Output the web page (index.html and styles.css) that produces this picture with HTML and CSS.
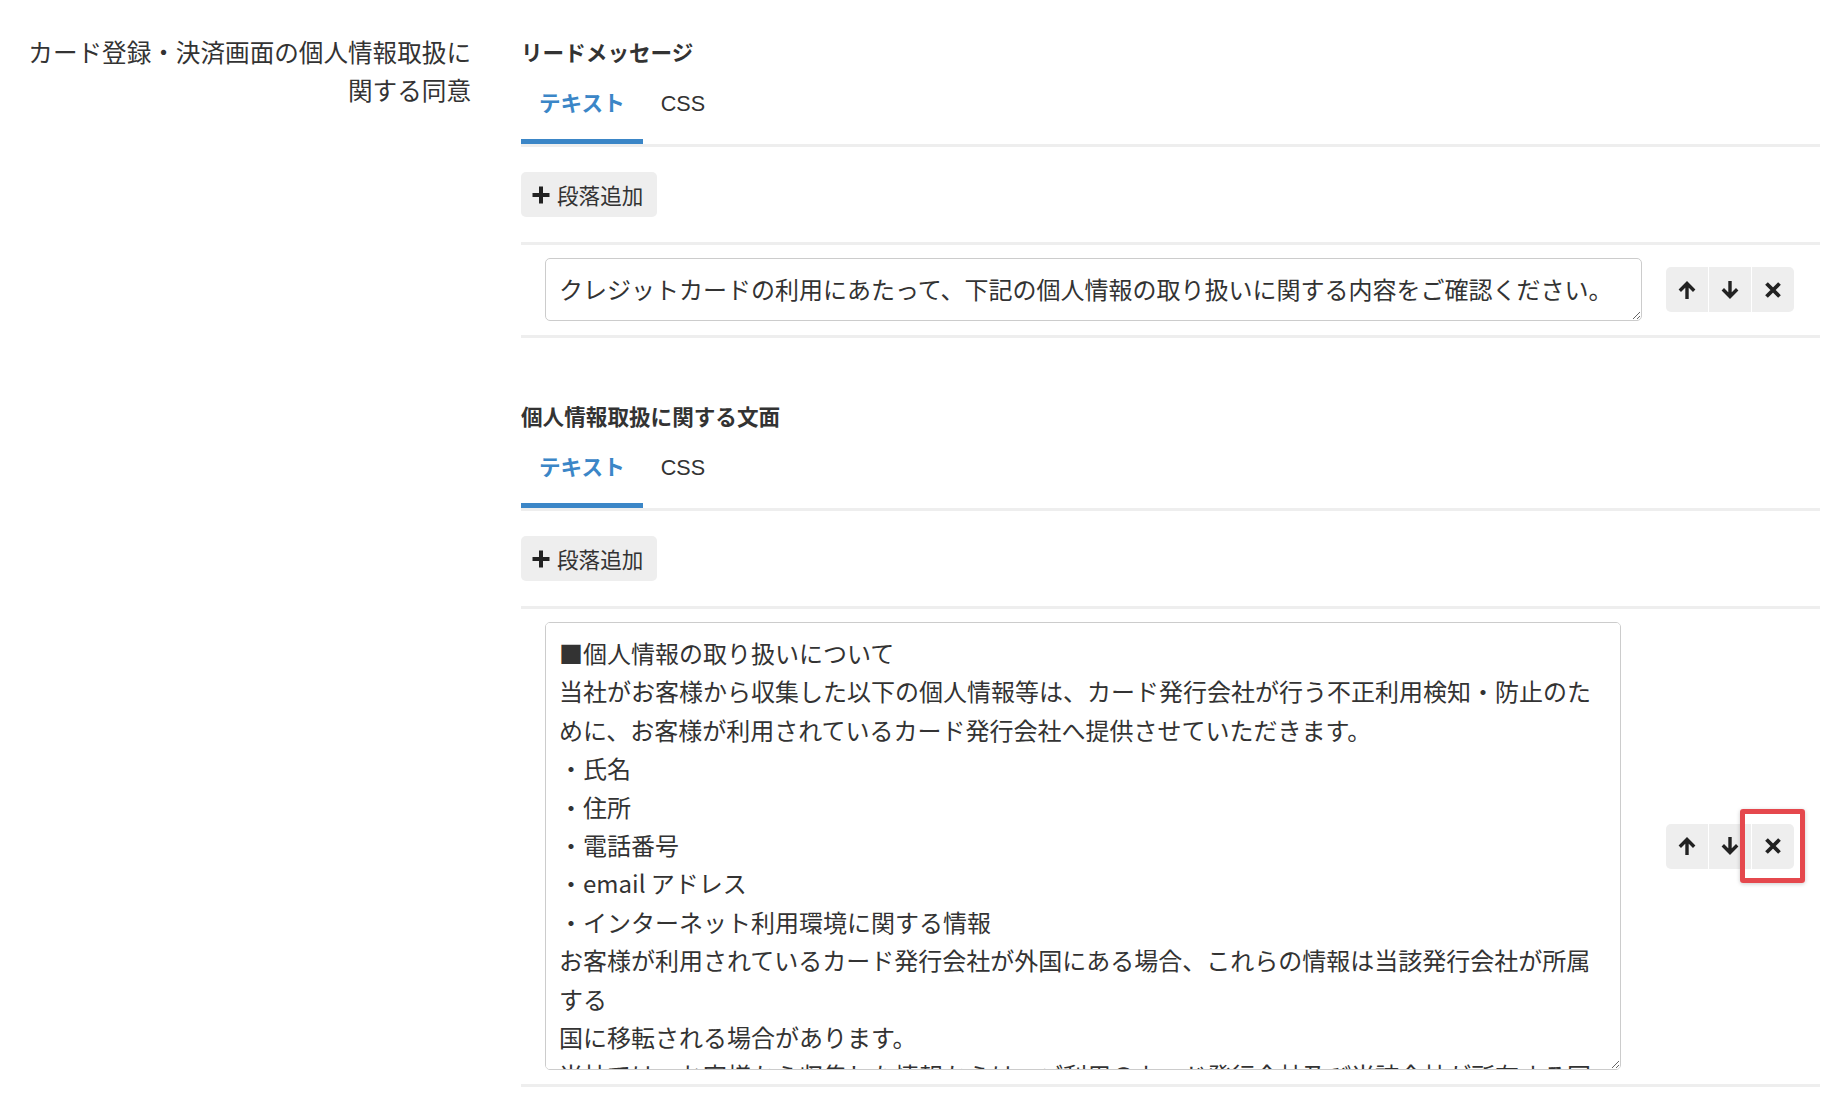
FILE: index.html
```html
<!DOCTYPE html>
<html lang="ja">
<head>
    <meta charset="utf-8">
    <title>個人情報取扱に関する同意</title>
    <link rel="stylesheet" href="styles.css">
</head>
<body>
<div class="setting-row">
    <div class="setting-label">カード登録・決済画面の個人情報取扱に関する同意</div>

    <div class="setting-body">
        <section class="field">
            <h3 class="field-title">リードメッセージ</h3>
            <nav class="tabs">
                <a class="tab active">テキスト</a>
                <a class="tab">CSS</a>
            </nav>
            <button class="add-button">
                <svg class="icon-plus" viewBox="0 0 18 18"><path d="M9 0.5v17M0.5 9h17"/></svg>
                段落追加
            </button>
            <div class="para-list">
                <div class="para-row">
                    <textarea class="para-text lead-text">クレジットカードの利用にあたって、下記の個人情報の取り扱いに関する内容をご確認ください。</textarea>
                    <div class="para-actions">
                        <button class="action-button" title="上へ">
                            <svg viewBox="0 0 20 20"><path d="M10 19V3.5M2.8 10.7L10 3.5l7.2 7.2"/></svg>
                        </button>
                        <button class="action-button" title="下へ">
                            <svg viewBox="0 0 20 20"><path d="M10 1v15.5M2.8 9.3L10 16.5l7.2-7.2"/></svg>
                        </button>
                        <button class="action-button" title="削除">
                            <svg class="icon-close" viewBox="0 0 18 18"><path d="M2.5 2.5l13 13M15.5 2.5l-13 13"/></svg>
                        </button>
                    </div>
                </div>
            </div>
        </section>

        <section class="field">
            <h3 class="field-title">個人情報取扱に関する文面</h3>
            <nav class="tabs">
                <a class="tab active">テキスト</a>
                <a class="tab">CSS</a>
            </nav>
            <button class="add-button">
                <svg class="icon-plus" viewBox="0 0 18 18"><path d="M9 0.5v17M0.5 9h17"/></svg>
                段落追加
            </button>
            <div class="para-list">
                <div class="para-row">
                    <textarea class="para-text policy-text">■個人情報の取り扱いについて
当社がお客様から収集した以下の個人情報等は、カード発行会社が行う不正利用検知・防止のために、お客様が利用されているカード発行会社へ提供させていただきます。
・氏名
・住所
・電話番号
・email アドレス
・インターネット利用環境に関する情報
お客様が利用されているカード発行会社が外国にある場合、これらの情報は当該発行会社が所属する
国に移転される場合があります。
当社では、お客様から収集した情報からは、ご利用のカード発行会社及び当該会社が所有する国を特定することができないため、以下の事項については、本人確認の完了後、カード発行会社により公表されている情報をご確認ください。</textarea>
                    <div class="para-actions">
                        <button class="action-button" title="上へ">
                            <svg viewBox="0 0 20 20"><path d="M10 19V3.5M2.8 10.7L10 3.5l7.2 7.2"/></svg>
                        </button>
                        <button class="action-button" title="下へ">
                            <svg viewBox="0 0 20 20"><path d="M10 1v15.5M2.8 9.3L10 16.5l7.2-7.2"/></svg>
                        </button>
                        <button class="action-button" title="削除">
                            <svg class="icon-close" viewBox="0 0 18 18"><path d="M2.5 2.5l13 13M15.5 2.5l-13 13"/></svg>
                            <span class="highlight"></span>
                        </button>
                    </div>
                </div>
            </div>
        </section>
    </div>
</div>
</body>
</html>
```

FILE: styles.css
```css
:root {
    --text-color: #333333;
    --icon-color: #222222;
    --accent-color: #3b86c7;
    --line-color: #eeeeee;
    --button-bg: #eeeeee;
    --input-border: #cccccc;
    --mark-color: #e5484d;
}

body {
    margin: 0;
    background: #ffffff;
    color: var(--text-color);
    font-family: "Liberation Sans", "Noto Sans CJK JP", sans-serif;
}

.setting-row {
    display: grid;
    grid-template-columns: 471px 1fr;
    column-gap: 50px;
    padding: 34px 24px 0 0;
}

.setting-label {
    padding-top: 1px;
    padding-left: 24px;
    text-align: right;
    font-size: 24.6px;
    line-height: 38px;
}

.field + .field {
    margin-top: 64px;
}

.field-title {
    margin: 4px 0 0 0;
    font-size: 21.6px;
    line-height: 32px;
    font-weight: 700;
}

/* tabs */
.tabs {
    display: flex;
    border-bottom: 3px solid var(--line-color);
}

.tab {
    padding: 18px 18px 19px;
    font-size: 21.6px;
    line-height: 32px;
    border-bottom: 5px solid transparent;
    cursor: pointer;
}

.tab.active {
    color: var(--accent-color);
    border-bottom-color: var(--accent-color);
    font-weight: 700;
}

/* buttons */
button {
    font-family: inherit;
    color: var(--text-color);
    border: none;
    cursor: pointer;
}

.add-button {
    display: inline-flex;
    align-items: center;
    gap: 7px;
    height: 45px;
    margin-top: 25px;
    padding: 0 14px 0 11px;
    font-size: 21.6px;
    background: var(--button-bg);
    border-radius: 5px;
}

.icon-plus {
    width: 18px;
    height: 18px;
    fill: none;
    stroke: var(--icon-color);
    stroke-width: 4;
}

/* paragraphs */
.para-list {
    margin-top: 25px;
    border-top: 3px solid var(--line-color);
}

.para-row {
    display: flex;
    align-items: center;
    padding: 13px 26px 14px 24px;
    border-bottom: 3px solid var(--line-color);
}

.para-text {
    flex: 1 1 0;
    min-width: 0;
    margin: 0 24px 0 0;
    padding: 11px 13px;
    box-sizing: border-box;
    border: 1px solid var(--input-border);
    border-radius: 5px;
    font-family: "Noto Sans CJK JP", sans-serif;
    font-size: 24px;
    line-height: 1.6;
    color: var(--text-color);
    scrollbar-width: none;
}

.para-text::-webkit-scrollbar {
    display: none;
}

.lead-text {
    height: 63px;
}

.policy-text {
    height: 448px;
    margin-right: 45px;
}

.para-actions {
    display: flex;
    gap: 1px;
}

.action-button {
    position: relative;
    display: flex;
    align-items: center;
    justify-content: center;
    width: 42px;
    height: 45px;
    padding: 0;
    background: var(--button-bg);
}

.action-button:first-child {
    border-radius: 5px 0 0 5px;
}

.action-button:last-child {
    border-radius: 0 5px 5px 0;
}

.action-button svg {
    width: 20px;
    height: 20px;
    fill: none;
    stroke: var(--icon-color);
    stroke-width: 3.4;
}

.action-button .icon-close {
    width: 18px;
    height: 18px;
    stroke-width: 3.8;
}

/* review mark around the delete button */
.highlight {
    position: absolute;
    top: -15px;
    left: -12px;
    width: 65px;
    height: 74px;
    box-sizing: border-box;
    border: 5px solid var(--mark-color);
    border-radius: 3px;
    box-shadow: 0 1px 4px rgba(0, 0, 0, 0.2);
    pointer-events: none;
}
```
